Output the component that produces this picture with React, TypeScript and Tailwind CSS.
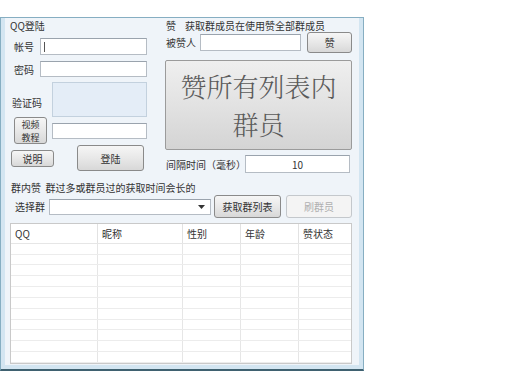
import React from "react";

const btn =
  "flex items-center justify-center border border-[#8a8a8a] rounded-[3px] bg-gradient-to-b from-[#f6f6f6] via-[#e8e8e8] to-[#d8d8d8] text-[#333]";
const input = "bg-white border border-[#b5bcc4] border-t-[#9aa3ad]";

export default function App() {
  const rows = Array.from({ length: 11 });
  const cols = [
    { w: "w-[87px]", t: "QQ" },
    { w: "w-[85px]", t: "昵称" },
    { w: "w-[58px]", t: "性别" },
    { w: "w-[58px]", t: "年龄" },
    { w: "flex-1", t: "赞状态" },
  ];
  return (
    <div
      className="w-[521px] h-[382px] bg-white pt-[17px] text-[10px] leading-[11px] text-[#333]"
      style={{ fontFamily: '"Noto Sans CJK SC", "Noto Sans", sans-serif' }}
    >
      <div className="w-[364px] h-[354px] border border-[#86aec2] border-b-[#3f6170] border-b-2 bg-[#eff4f9] shadow-[inset_4px_0_0_#d3e5f1,inset_-4px_0_0_#d3e5f1,inset_0_-4px_0_#d3e5f1] pl-[9px] flex flex-col">
        {/* top */}
        <div className="flex h-[155px]">
          {/* left */}
          <div className="w-[137px] flex flex-col">
            <div className="h-[11px] mt-[2px]">QQ登陆</div>
            <div className="flex items-center mt-[7px] h-[17px]">
              <span className="ml-[4px] w-[26px]">帐号</span>
              <div className={`${input} w-[107px] h-[17px] flex items-center pl-[3px]`}>
                <span className="w-px h-[10px] bg-[#555]" />
              </div>
            </div>
            <div className="flex items-center mt-[6px] h-[16px]">
              <span className="ml-[4px] w-[26px]">密码</span>
              <div className={`${input} w-[107px] h-[16px]`} />
            </div>
            <div className="flex items-end mt-[5px] h-[35px]">
              <span className="ml-[2px] w-[40px] mb-[9px]">验证码</span>
              <div className="w-[95px] h-[35px] bg-[#e4edf7] border border-[#c3d1de]" />
            </div>
            <div className="flex items-center h-[27px]">
              <div className={`${btn} ml-[4px] w-[33px] h-[27px] flex-col text-[9px] leading-[13px]`}>
                <span>视频</span>
                <span>教程</span>
              </div>
              <div className={`${input} ml-[5px] w-[95px] h-[16px]`} />
            </div>
            <div className="flex items-center h-[26px] mt-px">
              <div className={`${btn} ml-[1px] w-[43px] h-[17px]`}>说明</div>
              <div className={`${btn} ml-[23px] w-[67px] h-[26px]`}>登陆</div>
            </div>
          </div>
          {/* right */}
          <div className="ml-[18px] w-[187px] flex flex-col">
            <div className="h-[11px] mt-[2px] ml-px">赞&nbsp;&nbsp;&nbsp;&nbsp;获取群成员在使用赞全部群成员</div>
            <div className="flex items-center mt-[1px] h-[21px]">
              <span className="ml-px w-[34px]">被赞人</span>
              <div className={`${input} w-[102px] h-[17px]`} />
              <div className={`${btn} ml-[6px] w-[45px] h-[21px]`}>赞</div>
            </div>
            <div
              className="mt-[7px] h-[92px] w-[187px] border border-[#9b9b9b] rounded-[2px] bg-gradient-to-b from-[#efefef] via-[#e2e2e2] to-[#d4d4d4] flex flex-col items-center justify-center text-[26px] leading-[38px] text-[#5a5a5a] font-light"
              style={{ fontFamily: '"Noto Serif CJK SC", "Noto Sans CJK SC", serif' }}
            >
              <span>赞所有列表内</span>
              <span>群员</span>
            </div>
            <div className="flex items-center mt-[5px] h-[18px]">
              <span className="ml-px w-[79px]">间隔时间（毫秒）</span>
              <div className={`${input} w-[105px] h-[18px] flex items-center justify-center`}>10</div>
            </div>
          </div>
        </div>
        {/* group row */}
        <div className="h-[11px] mt-[9px] ml-px">群内赞&nbsp;&nbsp;群过多或群员过的获取时间会长的</div>
        <div className="flex items-center mt-[2px] h-[23px]">
          <span className="ml-[5px] w-[34px]">选择群</span>
          <div className={`${input} w-[162px] h-[16px] flex items-center justify-end pr-[5px]`}>
            <svg width="7" height="4" viewBox="0 0 7 4">
              <path d="M0 0 L7 0 L3.5 4 Z" fill="#333" />
            </svg>
          </div>
          <div className={`${btn} ml-[3px] w-[67px] h-[23px]`}>获取群列表</div>
          <div className="ml-[5px] w-[66px] h-[23px] flex items-center justify-center border border-[#c4c8cc] rounded-[3px] bg-[#f4f4f4] text-[#b0b0b0]">
            刷群员
          </div>
        </div>
        {/* table */}
        <div className="mt-[5px] w-[342px] h-[141px] bg-white border border-[#c9c9c9] flex flex-col overflow-hidden">
          <div className="flex h-[20px] border-b border-[#e6e6e6]">
            {cols.map((c, i) => (
              <div key={i} className={`${c.w} ${i < 4 ? "border-r border-[#e2e2e2]" : ""} pl-[4px] flex items-center`}>
                {c.t}
              </div>
            ))}
          </div>
          {rows.map((_, r) => (
            <div key={r} className="flex h-[11px] border-b border-[#ececec]">
              {cols.map((c, i) => (
                <div key={i} className={`${c.w} ${i < 4 ? "border-r border-[#e6e6e6]" : ""}`} />
              ))}
            </div>
          ))}
        </div>
      </div>
    </div>
  );
}
